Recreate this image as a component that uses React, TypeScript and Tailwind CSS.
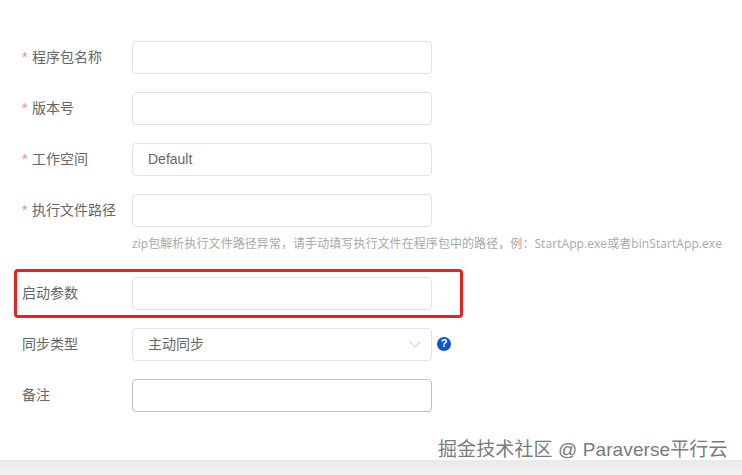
import React from "react";

const font = { fontFamily: '"Liberation Sans", "Noto Sans CJK SC", sans-serif' };

function Row({ label, required, children, after }: { label: string; required?: boolean; children?: React.ReactNode; after?: React.ReactNode }) {
  return (
    <div className="flex h-[33px] items-center">
      <div className="flex w-[132px] shrink-0 items-center whitespace-nowrap pl-[22px] text-[14px] text-[#666666]">
        {required && <span className="w-[10px] text-[14px] text-[#e58a94]">*</span>}
        <span>{label}</span>
      </div>
      {children}
      {after}
    </div>
  );
}

function Box({ children, dark }: { children?: React.ReactNode; dark?: boolean }) {
  return (
    <div className={`flex h-[33px] w-[300px] items-center justify-between rounded-[4px] border bg-white px-[15px] text-[14px] text-[#666666] ${dark ? "border-[#bdbdbd]" : "border-[#e2e2e2]"}`}>
      {children}
    </div>
  );
}

export default function App() {
  return (
    <div className="relative flex h-[475px] w-[742px] flex-col overflow-hidden bg-white" style={font}>
      <div className="flex flex-1 flex-col gap-[18px] pt-[41px]">
        <Row label="程序包名称" required><Box /></Row>
        <Row label="版本号" required><Box /></Row>
        <Row label="工作空间" required><Box>Default</Box></Row>
        <div className="flex h-[65px] flex-col">
          <Row label="执行文件路径" required><Box /></Row>
          <div className="ml-[132px] mt-[9px] whitespace-nowrap font-['Open_Sans','Noto_Sans_CJK_SC',sans-serif] text-[12px] leading-[16px] tracking-[0.07px] text-[#a8a8a8]">
            zip包解析执行文件路径异常，请手动填写执行文件在程序包中的路径，例：StartApp.exe或者binStartApp.exe
          </div>
        </div>
        <Row label="启动参数"><Box /></Row>
        <Row
          label="同步类型"
          after={
            <span className="ml-[5px] flex h-[14px] w-[14px] -translate-y-[1px] items-center justify-center rounded-full bg-[#0b57c9] text-[11px] font-bold leading-none text-white">?</span>
          }
        >
          <Box>
            <span>主动同步</span>
            <svg width="12" height="7" viewBox="0 0 12 7" fill="none" className="-mr-[5px]">
              <path d="M1 1l5 5 5-5" stroke="#d4d4d4" strokeWidth="1.2" />
            </svg>
          </Box>
        </Row>
        <Row label="备注"><Box dark /></Row>
      </div>
      <div className="h-[15px] bg-gradient-to-b from-[#e9e9e9] to-[#f1f1f1]" />
      <div className="absolute left-[14px] top-[269px] h-[49px] w-[449px] rounded-[4px] border-[3px] border-[#e0251f]" />
      <div className="absolute left-[438px] top-[437px] whitespace-nowrap text-[19px] leading-[26px] tracking-[0.1px] text-[#7a7a7a] [text-shadow:0_0_2px_#ffffff]">
        掘金技术社区 @ Paraverse平行云
      </div>
    </div>
  );
}
